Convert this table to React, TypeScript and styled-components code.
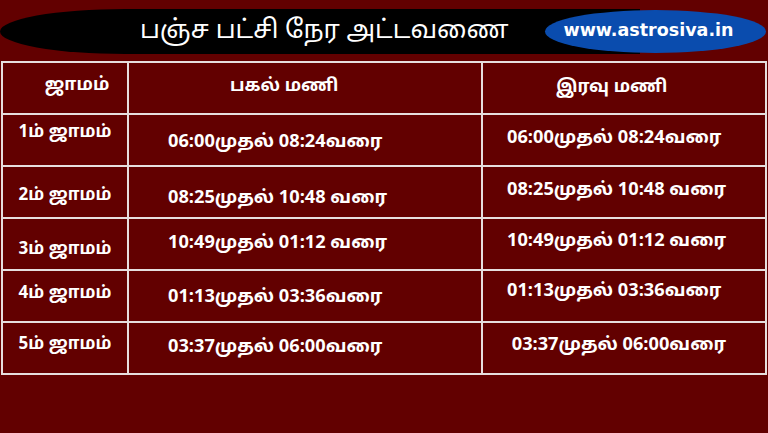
import { Fragment } from 'react';
import styled, { createGlobalStyle } from 'styled-components';

const GlobalStyle = createGlobalStyle`
    html, body {
        margin: 0;
        padding: 0;
        background: #620000;
    }
    body {
        font-family: "Noto Sans Tamil", "Noto Sans", "DejaVu Sans", sans-serif;
        color: #ffffff;
    }
`;

interface Slot {
    jamam: string,
    day: string,
    night: string,
    dy: [number, number, number]
}

const slots: Slot[] = [
    { jamam: '1ம் ஜாமம்', day: '06:00முதல் 08:24வரை', night: '06:00முதல் 08:24வரை', dy: [-8, 2, -2] },
    { jamam: '2ம் ஜாமம்', day: '08:25முதல் 10:48 வரை', night: '08:25முதல் 10:48 வரை', dy: [3, 6, -2] },
    { jamam: '3ம் ஜாமம்', day: '10:49முதல் 01:12 வரை', night: '10:49முதல் 01:12 வரை', dy: [5, -1, -3] },
    { jamam: '4ம் ஜாமம்', day: '01:13முதல் 03:36வரை', night: '01:13முதல் 03:36வரை', dy: [-3, 1, -5] },
    { jamam: '5ம் ஜாமம்', day: '03:37முதல் 06:00வரை', night: ' 03:37முதல் 06:00வரை', dy: [-4, -1, -3] },
];

const Page = styled.div`
    width: 768px;
    height: 433px;
    background: #620000;
    overflow: hidden;
    padding-top: 9px;
    box-sizing: border-box;
`;

const Banner = styled.div`
    position: relative;
    height: 45px;
    margin-bottom: 7px;
`;

const TitleBand = styled.div`
    width: 640px;
    height: 45px;
    background: #000000;
    border-radius: 128px 0 0 128px / 23px 0 0 23px;
    display: flex;
    align-items: center;
    padding-left: 140px;
    box-sizing: border-box;
`;

const Title = styled.h1`
    margin: 0;
    font-size: 25.5px;
    font-weight: 400;
    color: #ffffff;
    white-space: nowrap;
`;

const SiteBadge = styled.div`
    position: absolute;
    top: 1px;
    right: 2px;
    width: 221px;
    height: 43px;
    border-radius: 50%;
    background: #0a4cae;
    display: flex;
    align-items: center;
    justify-content: center;
    font-family: "DejaVu Sans", Verdana, sans-serif;
    font-weight: 700;
    font-size: 17.5px;
    color: #ffffff;
    padding: 0 14px 4px 0;
    box-sizing: border-box;
    white-space: nowrap;
`;

const Table = styled.div`
    margin-left: 1px;
    width: 766px;
    display: grid;
    grid-template-columns: 124px 352px 1fr;
    grid-auto-rows: 50px;
    gap: 2px;
    padding: 2px;
    box-sizing: border-box;
    background: #e6dede;
`;

const Cell = styled.div<{ $align: 'left' | 'center', $indent?: number, $dy?: number, $head?: boolean }>`
    background: #620000;
    display: flex;
    align-items: center;
    justify-content: ${p => p.$align === 'center' ? 'center' : 'flex-start'};
    padding-left: ${p => p.$indent ?? 0}px;
    padding-top: ${p => Math.max(0, (p.$dy ?? 0) * 2)}px;
    padding-bottom: ${p => Math.max(0, -(p.$dy ?? 0) * 2)}px;
    box-sizing: border-box;
    font-size: ${p => p.$head ? 17.5 : 18.2}px;
    font-weight: 700;
    white-space: pre;
`;

const JamamCell = styled(Cell)`
    font-size: 17px;
`;

const App: React.FC = () => {
    return (
        <>
            <GlobalStyle />
            <Page>
                <Banner>
                    <TitleBand>
                        <Title>பஞ்ச பட்சி நேர அட்டவணை</Title>
                    </TitleBand>
                    <SiteBadge>www.astrosiva.in</SiteBadge>
                </Banner>
                <Table>
                    <Cell $head $align="center" $indent={24} $dy={-3}>ஜாமம்</Cell>
                    <Cell $head $align="left" $indent={101} $dy={-2}>பகல் மணி</Cell>
                    <Cell $head $align="left" $indent={73} $dy={-1}>இரவு மணி</Cell>
                    {slots.map(s => (
                        <Fragment key={s.jamam}>
                            <JamamCell $align="center" $dy={s.dy[0]}>{s.jamam}</JamamCell>
                            <Cell $align="left" $indent={39} $dy={s.dy[1]}>{s.day}</Cell>
                            <Cell $align="left" $indent={24} $dy={s.dy[2]}>{s.night}</Cell>
                        </Fragment>
                    ))}
                </Table>
            </Page>
        </>
    )
}

export default App;
